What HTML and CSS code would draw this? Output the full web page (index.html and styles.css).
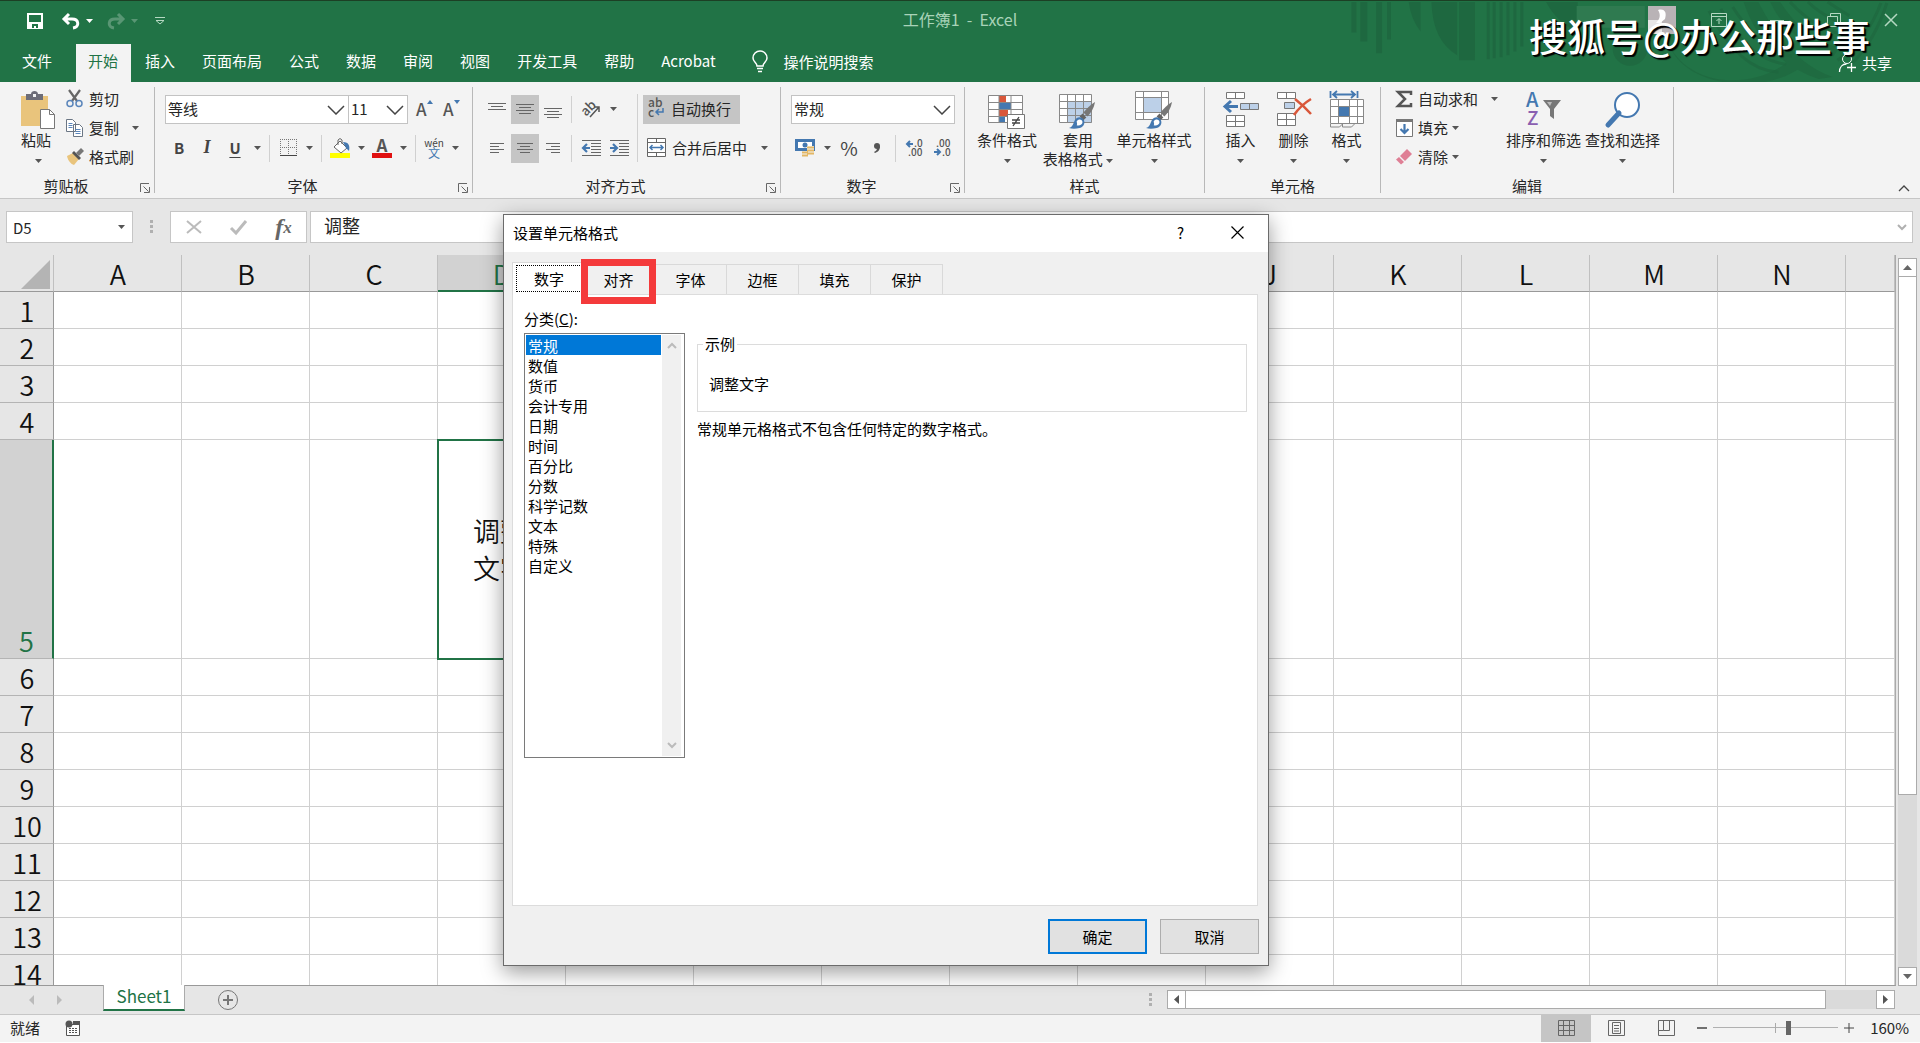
FILE: index.html
```html
<!DOCTYPE html>
<html lang="zh-CN">
<head>
<meta charset="utf-8">
<title>工作簿1 - Excel</title>
<link rel="stylesheet" href="styles.css">
</head>
<body>
<svg class="defs" aria-hidden="true">
  <symbol id="caret" viewBox="0 0 7 4"><path d="M0 0h7L3.500 4z" fill="currentColor"/></symbol>
  <symbol id="chev" viewBox="0 0 18 10"><path d="M1 1l8 8 8-8" fill="none" stroke="currentColor" stroke-width="1.500"/></symbol>
  <symbol id="launch" viewBox="0 0 10 10"><path d="M.5 9V.5H9M3.500 3.500l5 5M9.500 4v5.500H4" fill="none" stroke="#666"/></symbol>
  <symbol id="brush" viewBox="0 0 28 28"><path d="M27 0c-5 3-9 7-12 11l4 4c4-4 7-9 8-15z" fill="#777"/><path d="M14 12l4 4-3 3-4-4z" fill="#666"/><path d="M0 27c4-1 4-4 6-8 2-4 7-4 9-1s1 8-4 9c-4 1-8 1-11 0z" fill="#4478b0"/><path d="M8 20c2-3 6-2 6 1 0 2-3 4-6 3 1-1 0-2 0-4z" fill="#fff"/></symbol>
</svg>

<header class="top">
  <svg class="swirl" viewBox="0 0 580 82" aria-hidden="true">
    <g fill="#1e653e">
      <path d="M8 1h5v31H8zM17 1h7v40h-7zM33 1h6v52h-6zM44 1h4v38h-4zM66 1h12v30Q68 18 66 1zM89 1h26v54Q90 40 89 1zM117 1h16v59h-16zM145 1h3v58h-3zM151 1h3v57h-3zM158 1h3v56h-3zM165 1h3v54h-3zM172 1h3v50h-3zM179 1h3v45h-3zM205 1h32v30q-20-8-32-30z" opacity=".8"/>
      <path d="M330 45c20 40 80 46 118 18l18 2c-40 32-120 22-136-20zM405 1h15q30 60 75 76l-14 2Q425 60 405 1zM432 1h10q26 40 60 46l-6 9Q450 40 432 1z" opacity=".6"/>
    </g>
    <g fill="none" stroke="#1e653e" stroke-width="3" opacity=".6"><path d="M370 10q30 60 70 62M382 8q28 52 66 56M394 6q28 44 60 50M452 1q28 30 60 34M470 1q22 20 46 24M490 1l22 14M500 60q30-20 44-58M514 64q24-24 36-62"/><circle cx="290" cy="48" r="14" stroke-width="7"/></g>
    <path fill="#2f7a50" d="M236 5h69v22h-69z"/>
  </svg>
  <div class="titlebar">
    <div class="qat">
      <button aria-label="保存"><svg width="16" height="16"><path d="M1 1h14v14H1z" fill="none" stroke="#fff" stroke-width="2"/><path d="M1 9h14v6H1z" fill="#fff"/><path d="M5 11h6v4H9v-2H7v2H5z" fill="#217346"/></svg></button>
      <button class="undo" aria-label="撤消"><svg width="18" height="16"><path d="M7 1L2 6l5 5M2 6h8c7 0 8 8 1 9" fill="none" stroke="#fff" stroke-width="3"/></svg><svg class="c"><use href="#caret"/></svg></button>
      <button class="redo" aria-label="恢复"><svg width="18" height="16"><path d="M11 1l5 5-5 5M16 6H8c-7 0-8 8-1 9" fill="none" stroke="#fff" stroke-width="3"/></svg><svg class="c"><use href="#caret"/></svg></button>
      <button aria-label="自定义快速访问工具栏"><svg width="10" height="8"><path d="M0 .5h10M1 3.500h8L5 7z" fill="none" stroke="#b5d8c2"/></svg></button>
    </div>
    <div class="title">工作簿1&nbsp; -&nbsp; Excel</div>
    <div class="winctl">
      <svg width="28" height="28" aria-label="账户"><path d="M0 0h28v28H0z" fill="#b9b3b6"/><path d="M0 14h14v14H0z" fill="#e8e6e6"/><path d="M10 4c7-2 9 3 7 9l-5 4H8c4-4 5-8 2-13z" fill="#fff"/></svg>
      <button aria-label="功能区显示选项"><svg width="16" height="14"><path d="M.5.500h15v13H.5zM.5 3.500h15M8 11V6M5.500 8L8 5.500 10.500 8" fill="none" stroke="#b5d8c2"/></svg></button>
      <button aria-label="最小化"><svg width="14" height="14"><path d="M0 7.500h14" stroke="#b5d8c2"/></svg></button>
      <button aria-label="还原"><svg width="14" height="14"><path d="M.5 3.500h10v10H.5zM3.500 3V.5h10v10H11" fill="none" stroke="#b5d8c2"/></svg></button>
      <button aria-label="关闭"><svg width="14" height="14"><path d="M1 1l12 12M13 1L1 13" stroke="#b5d8c2" stroke-width="1.500"/></svg></button>
    </div>
  </div>
  <nav class="tabs">
    <button class="file">文件</button><button class="on">开始</button><button>插入</button><button>页面布局</button><button>公式</button><button>数据</button><button>审阅</button><button>视图</button><button>开发工具</button><button>帮助</button><button>Acrobat</button>
    <button class="tell"><svg width="16" height="22"><path d="M5 15c0-3-4-4-4-8a7 7 0 0 1 14 0c0 4-4 5-4 8zM5 17.500h6M6 20.500h4" fill="none" stroke="#fff" stroke-width="1.500"/></svg>操作说明搜索</button>
    <button class="share"><svg width="18" height="18"><circle cx="8" cy="5" r="4.500" fill="none" stroke="#fff"/><path d="M.5 18c0-5 3-8 7-8M8 13.500h9M12.500 9v9" fill="none" stroke="#fff" stroke-width="1.300"/></svg>共享</button>
  </nav>
  <div class="mark">搜狐号@办公那些事</div>
</header>

<section class="ribbon">
  <div class="group g1">
    <div class="body">
      <button class="big"><svg width="36" height="38"><path d="M1 5h27v30H1z" fill="#e9c47c"/><path d="M6 3h5c0-4 7-4 7 0h5v6H6z" fill="#6d6d78"/><path d="M13 3h3v3h-3z" fill="#f3f3f3"/><path d="M20.500 18.500h9l5 5v14h-14z" fill="#fff" stroke="#777"/><path d="M29.500 18.500v5h5" fill="none" stroke="#777"/></svg><span>粘贴</span><svg class="c"><use href="#caret"/></svg></button>
      <div class="rows">
        <button><svg width="18" height="18"><path d="M3 0l8 11M14 0L6 11" stroke="#666" stroke-width="2.200"/><circle cx="4" cy="13.500" r="3" fill="none" stroke="#5b86bb" stroke-width="1.500"/><circle cx="13" cy="13.500" r="3" fill="none" stroke="#5b86bb" stroke-width="1.500"/></svg>剪切</button>
        <button><svg width="18" height="18"><path d="M.5.500h6l3 3v9H.5zM7.500 5.500h6l3 3v9h-9z" fill="#fff" stroke="#6b7684"/><path d="M2.500 4.500h4M2.500 6.500h4M2.500 8.500h4M9.500 10.500h5M9.500 12.500h5M9.500 14.500h5" stroke="#5b86bb"/></svg>复制<svg class="c far"><use href="#caret"/></svg></button>
        <button><svg width="18" height="18"><path d="M1 8l6-3 6 6-5 6C5 16 2 13 1 8z" fill="#e9c47c"/><path d="M6 5l2-2 7 7-2 2z" fill="#555"/><path d="M10 5l5-5 3 3-5 5z" fill="#777"/></svg>格式刷</button>
      </div>
    </div>
    <div class="label"><span>剪贴板</span><svg class="l"><use href="#launch"/></svg></div>
  </div>

  <div class="group g2">
    <div class="body col">
      <div class="line">
        <label class="combo fontname"><select aria-label="字体"><option>等线</option></select><svg><use href="#chev"/></svg></label>
        <label class="combo fontsize"><select aria-label="字号"><option>11</option></select><svg><use href="#chev"/></svg></label>
        <button class="grow" aria-label="增大字号">A<svg class="c"><path d="M0 4h6L3 0z" fill="#4478b0"/></svg></button>
        <button class="grow" aria-label="减小字号">A<svg class="c"><path d="M0 0h6L3 4z" fill="#4478b0"/></svg></button>
      </div>
      <div class="line">
        <button class="b28 bold">B</button><button class="b28 ital">I</button><button class="b28 under">U</button><button class="dd" aria-label="下划线选项"><svg class="c"><use href="#caret"/></svg></button><i class="sep"></i>
        <button class="b26" aria-label="边框"><svg width="17" height="17"><path d="M.5 0v16M8.500 0v16M16.500 0v16M0 .5h17M0 8.500h17" stroke="#777" stroke-dasharray="1 1"/><path d="M0 16.500h17" stroke="#444"/></svg></button><button class="dd" aria-label="边框选项"><svg class="c"><use href="#caret"/></svg></button><i class="sep"></i>
        <button class="b26" aria-label="填充颜色"><svg width="20" height="20"><path d="M0 15h20v5H0z" fill="#ff0"/><path d="M10 3l7 7-6 5-7-6z" fill="#fff" stroke="#666"/><path d="M8 7V2q2-3 4 0v4" fill="none" stroke="#666"/><path d="M13 4c6 0 7 4 6 9l-3-3z" fill="#4478b0"/></svg></button><button class="dd" aria-label="填充颜色选项"><svg class="c"><use href="#caret"/></svg></button>
        <button class="b26 fcolor" aria-label="字体颜色"><span>A</span></button><button class="dd" aria-label="字体颜色选项"><svg class="c"><use href="#caret"/></svg></button><i class="sep"></i>
        <button class="b26 wen" aria-label="显示拼音"><small>wén</small><span>文</span></button><button class="dd" aria-label="拼音选项"><svg class="c"><use href="#caret"/></svg></button>
      </div>
    </div>
    <div class="label"><span>字体</span><svg class="l"><use href="#launch"/></svg></div>
  </div>

  <div class="group g3">
    <div class="body">
      <div class="col">
        <div class="line">
          <button class="b28" aria-label="顶端对齐"><svg width="18" height="18"><path d="M0 3.500h18M3 6.500h12M0 9.500h18" stroke="#666"/></svg></button><button class="b28 sel" aria-label="垂直居中"><svg width="18" height="18"><path d="M0 4.500h18M3 7.500h12M0 10.500h18M3 13.500h12" stroke="#666"/></svg></button><button class="b28" aria-label="底端对齐"><svg width="18" height="18"><path d="M0 8.500h18M3 11.500h12M0 14.500h18M3 17.500h12" stroke="#666"/></svg></button><i class="sep"></i>
          <button class="b28" aria-label="方向"><svg width="20" height="18"><text x="0" y="13" transform="rotate(-45 7 9)" font-size="13" class="bt">ab</text><path d="M9 17L18 7M13 7h5v5" fill="none" stroke="#555" stroke-width="1.500"/></svg></button><button class="dd" aria-label="方向选项"><svg class="c"><use href="#caret"/></svg></button>
        </div>
        <div class="line">
          <button class="b28" aria-label="左对齐"><svg width="18" height="14"><path d="M2 2.500h14M2 5.500h9M2 8.500h14M2 11.500h9" stroke="#666"/></svg></button><button class="b28 sel" aria-label="居中"><svg width="18" height="14"><path d="M1 2.500h16M4 5.500h10M1 8.500h16M4 11.500h10" stroke="#666"/></svg></button><button class="b28" aria-label="右对齐"><svg width="18" height="14"><path d="M2 2.500h14M7 5.500h9M2 8.500h14M7 11.500h9" stroke="#666"/></svg></button><i class="sep"></i>
          <button class="b28" aria-label="减少缩进"><svg width="19" height="18"><path d="M0 1.500h19M9 4.500h10M9 7.500h10M9 10.500h10M9 13.500h10M0 16.500h19" stroke="#666"/><path d="M8 9H2M5 5L1 9l4 4" fill="none" stroke="#4478b0" stroke-width="2.200"/></svg></button><button class="b28" aria-label="增加缩进"><svg width="19" height="18"><path d="M0 1.500h19M9 4.500h10M9 7.500h10M9 10.500h10M9 13.500h10M0 16.500h19" stroke="#666"/><path d="M0 9h6M3 5l4 4-4 4" fill="none" stroke="#4478b0" stroke-width="2.200"/></svg></button>
        </div>
      </div>
      <i class="sep tall"></i>
      <div class="col">
        <button class="wide sel"><svg width="18" height="20"><text x="1" y="8" font-size="12" class="bt">ab</text><text x="1" y="18" font-size="12" class="bt">c</text><path d="M16 9v4H9M12 10l-3 3 3 3" fill="none" stroke="#4478b0" stroke-width="1.500"/></svg>自动换行</button>
        <button class="wide"><svg width="19" height="19"><path d="M.5.500h18v18H.5zM.5 4.500h18M.5 14.500h18M9.500.500v4M9.500 14.500v4" fill="#fff" stroke="#666"/><path d="M3 9.500h13M5.500 7L3 9.500 5.500 12M13.500 7L16 9.500 13.500 12" fill="none" stroke="#4478b0" stroke-width="1.500"/></svg>合并后居中<svg class="c far"><use href="#caret"/></svg></button>
      </div>
    </div>
    <div class="label"><span>对齐方式</span><svg class="l"><use href="#launch"/></svg></div>
  </div>

  <div class="group g4">
    <div class="body col">
      <div class="line"><label class="combo numfmt"><select aria-label="数字格式"><option>常规</option></select><svg><use href="#chev"/></svg></label></div>
      <div class="line">
        <button class="b28" aria-label="会计数字格式"><svg width="20" height="20"><path d="M1.500 2.500h17v9h-17z" fill="#fff" stroke="#4478b0" stroke-width="3"/><circle cx="10" cy="7" r="2.500" fill="#4478b0"/><path d="M12 8h7v11H7v-6h5z" fill="#f3f3f3"/><path d="M12 9.500h7M12 12.500h7M12 15.500h7M7 14.500h6M7 17.500h6" stroke="#e3b765" stroke-width="2"/></svg></button><button class="dd" aria-label="会计格式选项"><svg class="c"><use href="#caret"/></svg></button><button class="b28 pct">%</button><button class="b28" aria-label="千位分隔样式"><svg width="8" height="12"><circle cx="4" cy="4" r="3" fill="#555"/><path d="M7 4c0 4-2 6-5 7l-1-1c2-1 3-2 3-4z" fill="#555"/></svg></button><i class="sep"></i>
        <button class="b28" aria-label="增加小数位数"><svg width="18" height="18"><text x="8" y="8" font-size="10" class="bt">.0</text><text x="2" y="17" font-size="10" class="bt">.00</text><path d="M7 5H2M4 2L1 5l3 3" fill="none" stroke="#4478b0" stroke-width="2"/></svg></button><button class="b28" aria-label="减少小数位数"><svg width="18" height="18"><text x="2" y="8" font-size="10" class="bt">.00</text><text x="8" y="17" font-size="10" class="bt">.0</text><path d="M0 13h6M3 10l3 3-3 3" fill="none" stroke="#4478b0" stroke-width="2"/></svg></button>
      </div>
    </div>
    <div class="label"><span>数字</span><svg class="l"><use href="#launch"/></svg></div>
  </div>

  <div class="group g5">
    <div class="body">
      <button class="big"><svg width="38" height="38"><path d="M.5 4.500h34v27H.5z" fill="#fff"/><path d="M11 5h7v6h-7zM11 19h9v6h-9z" fill="#d9573a"/><path d="M11 12h12v6H11zM11 26h6v6h-6z" fill="#4478b0"/><path d="M.5 4.500h34v27H.5zM11 4v28M23 4v28M0 11.500h34M0 18.500h34M0 25.500h34" fill="none" stroke="#888"/><path d="M19.500 23.500h17v14h-17z" fill="#fff" stroke="#777"/><path d="M24 29h8M24 32h8M31 26l-6 9" stroke="#444" stroke-width="1.300"/></svg><span>条件格式</span><svg class="c"><use href="#caret"/></svg></button>
      <button class="big"><svg width="38" height="38"><path d="M.5 3.500h32v28H.5z" fill="#fff"/><path d="M9 10h24v22H9z" fill="#bcd0e8"/><path d="M.5 3.500h32v28H.5zM8.500 3v29M16.500 3v29M24.500 3v29M0 10.500h32M0 17.500h32M0 24.500h32" fill="none" stroke="#888"/><use href="#brush" x="10" y="11" width="27" height="27"/></svg><span>套用<br>表格格式 <svg class="c"><use href="#caret"/></svg></span></button>
      <button class="big"><svg width="38" height="38"><path d="M.5.500h33v28H.5z" fill="#fff"/><path d="M8 7h18v14H8z" fill="#bcd0e8"/><path d="M.5.500h33v28H.5zM8.500 0v29M26.500 0v29M0 6.500h34M0 21.500h34" fill="none" stroke="#888"/><use href="#brush" x="11" y="11" width="27" height="27"/></svg><span>单元格样式</span><svg class="c"><use href="#caret"/></svg></button>
    </div>
    <div class="label"><span>样式</span></div>
  </div>

  <div class="group g6">
    <div class="body">
      <button class="big"><svg width="36" height="38"><path d="M3.500 1.500h18v6h-18zM12.500 1v6M3.500 24.500h18v11h-18zM12.500 24v11M3 30.500h18" fill="#fff" stroke="#777"/><path d="M17.500 12.500h18v6h-18zM26.500 12v6" fill="#bcd0e8" stroke="#777"/><path d="M15 15.500H3M8 10l-6 5.500L8 21" fill="none" stroke="#4478b0" stroke-width="3"/></svg><span>插入</span><svg class="c"><use href="#caret"/></svg></button>
      <button class="big"><svg width="36" height="38"><path d="M1.500 1.500h18v6h-18zM10.500 1v6M1.500 22.500h18v12h-18zM10.500 22v12M1 28.500h18" fill="#fff" stroke="#777"/><path d="M8.500 11.500h10v6h-10z" fill="#bcd0e8" stroke="#777"/><path d="M19 8q9 7 16 15M35 8q-10 6-17 16" fill="none" stroke="#d9573a" stroke-width="2.500"/></svg><span>删除</span><svg class="c"><use href="#caret"/></svg></button>
      <button class="big"><svg width="36" height="38"><path d="M1.500 0v7M28.500 0v7M4 3.500h22M8 0L4 3.500 8 7M22 0l4 3.500L22 7" fill="none" stroke="#4478b0" stroke-width="1.800"/><path d="M1.500 8.500h33v24h-33z" fill="#fff"/><path d="M10 16h10v10H10z" fill="#4478b0"/><path d="M1.500 8.500h33v24h-33zM9.500 8v24M20.500 8v24M28.500 8v24M1 15.500h33M1 25.500h33M1.500 33v3h9l3-3v3h9l3-3" fill="none" stroke="#888"/></svg><span>格式</span><svg class="c"><use href="#caret"/></svg></button>
    </div>
    <div class="label"><span>单元格</span></div>
  </div>

  <div class="group g7">
    <div class="body">
      <div class="rows">
        <button><svg width="17" height="18"><path d="M15 5V2H2l7 7-7 7h13v-3" fill="none" stroke="#555" stroke-width="2.500"/></svg>自动求和<svg class="c far"><use href="#caret"/></svg></button>
        <button><svg width="17" height="18"><path d="M.5.500h16v17H.5z" fill="#fff" stroke="#777"/><path d="M0 0h17v3H0z" fill="#777"/><path d="M8.500 5v9M4.500 10l4 4 4-4" fill="none" stroke="#4478b0" stroke-width="2.200"/></svg>填充<svg class="c near"><use href="#caret"/></svg></button>
        <button><svg width="17" height="18"><path d="M11 1l5 5-7 7-5-5z" fill="#df7f95"/><path d="M3 9l5 5-3 2.500-5-5z" fill="#df7f95"/></svg>清除<svg class="c near"><use href="#caret"/></svg></button>
      </div>
      <button class="big"><svg width="36" height="38"><text x="0" y="16" font-size="20" class="az a">A</text><text x="1" y="34" font-size="19" class="az z">Z</text><path d="M17 9h18l-7 9v10l-4-3v-7z" fill="#777"/><path d="M21 11h5l-2 4z" fill="#bbb"/></svg><span>排序和筛选</span><svg class="c"><use href="#caret"/></svg></button>
      <button class="big"><svg width="36" height="38"><circle cx="22" cy="14" r="12" fill="#fff" stroke="#4478b0" stroke-width="2"/><path d="M14 22L3 34" stroke="#4478b0" stroke-width="5" stroke-linecap="round"/></svg><span>查找和选择</span><svg class="c"><use href="#caret"/></svg></button>
    </div>
    <div class="label"><span>编辑</span></div>
  </div>
  <button class="collapse" aria-label="折叠功能区"><svg width="12" height="8"><path d="M1 7l5-5 5 5" fill="none" stroke="#444" stroke-width="1.300"/></svg></button>
</section>

<section class="formula">
  <label class="combo name"><input value="D5" aria-label="名称框"><svg class="c"><use href="#caret"/></svg></label>
  <svg class="grip" width="4" height="14"><path d="M0 0h3v3H0zM0 5h3v3H0zM0 10h3v3H0z" fill="#b0b0b0"/></svg>
  <div class="fx">
    <button aria-label="取消"><svg width="16" height="14"><path d="M1 1l14 12M15 1L1 13" stroke="#bbb" stroke-width="2"/></svg></button>
    <button aria-label="输入"><svg width="17" height="14"><path d="M1 8l5 5L16 1" fill="none" stroke="#bbb" stroke-width="3"/></svg></button>
    <button class="fn">f<sub>x</sub></button>
  </div>
  <label class="combo text"><input value="调整" aria-label="编辑栏"><svg width="10" height="7"><path d="M1 1l4 4 4-4" fill="none" stroke="#b0b0b0" stroke-width="2"/></svg></label>
</section>

<main class="work">
  <div class="sheet">
    <table class="grid">
      <colgroup><col class="hd"><col span="14" class="cw"><col></colgroup>
      <thead><tr><th><svg class="corner" width="30" height="29"><path d="M29 0v29H0z" fill="#b4b4b4"/></svg></th><th>A</th><th>B</th><th>C</th><th class="cur">D</th><th>E</th><th>F</th><th>G</th><th>H</th><th>I</th><th>J</th><th>K</th><th>L</th><th>M</th><th>N</th><th></th></tr></thead>
      <tbody>
        <tr><th>1<td><td><td><td><td><td><td><td><td><td><td><td><td><td><td>
        <tr><th>2<td><td><td><td><td><td><td><td><td><td><td><td><td><td><td>
        <tr><th>3<td><td><td><td><td><td><td><td><td><td><td><td><td><td><td>
        <tr><th>4<td><td><td><td><td><td><td><td><td><td><td><td><td><td><td>
        <tr class="r5"><th>5<td><td><td><td class="active">调整<br>文字<td><td><td><td><td><td><td><td><td><td><td>
        <tr><th>6<td><td><td><td><td><td><td><td><td><td><td><td><td><td><td>
        <tr><th>7<td><td><td><td><td><td><td><td><td><td><td><td><td><td><td>
        <tr><th>8<td><td><td><td><td><td><td><td><td><td><td><td><td><td><td>
        <tr><th>9<td><td><td><td><td><td><td><td><td><td><td><td><td><td><td>
        <tr><th>10<td><td><td><td><td><td><td><td><td><td><td><td><td><td><td>
        <tr><th>11<td><td><td><td><td><td><td><td><td><td><td><td><td><td><td>
        <tr><th>12<td><td><td><td><td><td><td><td><td><td><td><td><td><td><td>
        <tr><th>13<td><td><td><td><td><td><td><td><td><td><td><td><td><td><td>
        <tr><th>14<td><td><td><td><td><td><td><td><td><td><td><td><td><td><td>
      </tbody>
    </table>
  </div>
  <div class="vscroll">
    <button aria-label="向上滚动"><svg width="9" height="5"><path d="M0 5h9L4.500 0z" fill="#666"/></svg></button>
    <div class="thumb"></div><div class="space"></div>
    <button aria-label="向下滚动"><svg width="9" height="5"><path d="M0 0h9L4.500 5z" fill="#666"/></svg></button>
  </div>
</main>

<footer class="sheets">
  <button class="nav" aria-label="上一张"><svg width="5" height="10"><path d="M5 0v10L0 5z" fill="#bbb"/></svg></button>
  <button class="nav" aria-label="下一张"><svg width="5" height="10"><path d="M0 0v10l5-5z" fill="#bbb"/></svg></button>
  <button class="stab">Sheet1</button>
  <button class="add" aria-label="新工作表"><svg width="20" height="20"><circle cx="10" cy="10" r="9.500" fill="none" stroke="#777"/><path d="M5 10h10M10 5v10" stroke="#777" stroke-width="2"/></svg></button>
  <svg class="grip" width="4" height="14"><path d="M0 0h3v3H0zM0 5h3v3H0zM0 10h3v3H0z" fill="#b0b0b0"/></svg>
  <div class="hscroll">
    <button aria-label="向左滚动"><svg width="5" height="9"><path d="M5 0v9L0 4.500z" fill="#555"/></svg></button>
    <div class="thumb"></div><div class="space"></div>
    <button aria-label="向右滚动"><svg width="5" height="9"><path d="M0 0v9l5-4.500z" fill="#555"/></svg></button>
  </div>
</footer>

<footer class="status">
  <span>就绪</span>
  <svg class="macro" width="16" height="16"><path d="M1.500 4.500h13v11h-13z" fill="#fff" stroke="#555"/><path d="M8 1h7v4H8z" fill="#555"/><circle cx="4" cy="4" r="3.500" fill="#555"/><path d="M4 8.500h9M4 10.500h9M4 12.500h9" stroke="#555" stroke-dasharray="2 1"/></svg>
  <div class="views">
    <button class="sel" aria-label="普通"><svg width="17" height="16"><path d="M.5.500h16v15H.5zM5.500 0v16M11.500 0v16M0 5.500h17M0 10.500h17" fill="none" stroke="#666"/></svg></button>
    <button aria-label="页面布局"><svg width="17" height="16"><path d="M.5.500h16v15H.5zM4.500 2.500h8v11h-8zM6 5.500h5M6 8.500h5M6 11h5" fill="none" stroke="#666"/></svg></button>
    <button aria-label="分页预览"><svg width="17" height="16"><path d="M.5.500h16v15H.5zM.5 10.500h5M5.500 0v10.500h6V0" fill="none" stroke="#666"/></svg></button>
  </div>
  <button class="zm" aria-label="缩小"><svg width="10" height="10"><path d="M0 5h10" stroke="#444" stroke-width="1.500"/></svg></button>
  <input class="zoom" type="range" min="0" max="100" value="61" aria-label="缩放">
  <button class="zm" aria-label="放大"><svg width="10" height="10"><path d="M0 5h10M5 0v10" stroke="#444"/></svg></button>
  <span class="pc">160%</span>
</footer>

<div class="dialog" role="dialog" aria-labelledby="dt">
  <div class="dtitle"><span id="dt">设置单元格格式</span><button>?</button><button aria-label="关闭对话框"><svg width="13" height="13"><path d="M.5.500l12 12M12.500.500l-12 12" stroke="#000" stroke-width="1.200"/></svg></button></div>
  <div class="dtabs">
    <button class="on"><span>数字</span></button><button class="hot">对齐</button><button>字体</button><button>边框</button><button>填充</button><button>保护</button>
  </div>
  <div class="panel">
    <div class="cats">
      <label for="cat">分类(<u>C</u>):</label>
      <div class="listbox">
        <select id="cat" size="12"><option selected>常规</option><option>数值</option><option>货币</option><option>会计专用</option><option>日期</option><option>时间</option><option>百分比</option><option>分数</option><option>科学记数</option><option>文本</option><option>特殊</option><option>自定义</option></select>
        <div class="bar"><svg width="10" height="7"><path d="M1 6l4-4 4 4" fill="none" stroke="#bbb" stroke-width="2"/></svg><svg width="10" height="7"><path d="M1 1l4 4 4-4" fill="none" stroke="#bbb" stroke-width="2"/></svg></div>
      </div>
    </div>
    <div class="detail">
      <fieldset><legend>示例</legend>调整文字</fieldset>
      <p>常规单元格格式不包含任何特定的数字格式。</p>
    </div>
  </div>
  <div class="dbtns"><button class="ok">确定</button><button>取消</button></div>
</div>
</body>
</html>
```
FILE: styles.css
```css
*, *::after { box-sizing: border-box; }
html, body { height: 100%; }
body {
  margin: 0;
  display: flex;
  flex-direction: column;
  overflow: hidden;
  position: relative;
  background: #e6e6e6;
  color: #262626;
  font: 15px/20px "Noto Sans CJK SC", sans-serif;
}
button, input, select { font: inherit; color: inherit; border: 0; background: none; padding: 0; margin: 0; border-radius: 0; }
button { display: flex; align-items: center; justify-content: center; white-space: nowrap; }
svg { display: block; flex: none; overflow: visible; }
.defs { position: absolute; width: 0; height: 0; }
.c { width: 7px; height: 4px; color: #555; }

/* title bar and tabs */
.top { position: relative; background: #217346; border-top: 1px solid #1c3f24; color: #fff; flex: none; }
.swirl { position: absolute; right: 0; top: 0; width: 580px; height: 81px; overflow: hidden; }
.titlebar { position: relative; display: grid; grid-template-columns: 1fr auto 1fr; height: 43px; align-items: start; }
.qat { display: flex; align-items: center; height: 40px; padding-left: 27px; }
.qat .c { color: #fff; margin-left: 6px; }
.undo { margin-left: 19px; }
.redo { margin: 0 17px 0 14px; opacity: .25; }
.title { color: #a9d3b8; padding-top: 8px; font-size: 16px; }
.winctl { display: flex; align-items: center; justify-content: flex-end; gap: 43px; height: 38px; padding-right: 22px; }
.winctl > svg { margin-right: -8px; }
.tabs { position: relative; display: flex; height: 38px; }
.tabs button { padding: 0 14px 4px 13px; }
.tabs .file { padding: 0 24px 4px 22px; }
.tabs .on { padding: 0 13px 4px 12px; margin-right: 1px; background: #f3f3f3; color: #217346; }
.tabs .tell { gap: 16px; margin-left: 9px; padding-bottom: 2px; }
.tabs .share { gap: 5px; margin-left: auto; padding: 0 28px 0 0; }
.mark {
  position: absolute; right: 50px; top: 13px;
  font-size: 38px; line-height: 42px; font-weight: 500;
  text-shadow: 2px 2px 1px #000, 1px 1px 0 #000;
}

/* ribbon */
.ribbon { display: flex; flex: none; height: 117px; padding: 5px 0; background: #f3f3f3; border-bottom: 1px solid #c6c6c6; }
.group { display: flex; flex-direction: column; border-right: 1px solid #b8b8b8; }
.g1 { width: 155px; }
.g2 { width: 318px; }
.g3 { width: 308px; }
.g4 { width: 184px; }
.g5 { width: 240px; }
.g6 { width: 176px; }
.g7 { width: 293px; }
.body { display: flex; flex: 1; }
.label { display: flex; align-items: center; height: 14px; }
.label span { flex: 1; text-align: center; }
.l { width: 10px; height: 10px; margin: 4px 4px 0 8px; }
.big { flex-direction: column; justify-content: flex-start; padding-top: 4px; line-height: 19px; }
.big > span { margin-top: 1px; }
.big > .c { margin-top: 10px; }
.big span .c { display: inline-block; vertical-align: middle; }
.rows { display: flex; flex-direction: column; margin-top: -2px; }
.rows button { height: 29px; gap: 5px; padding-bottom: 2px; justify-content: flex-start; }
.far { margin-left: 8px; }
.near { margin-left: -1px; }
.g1 .big { width: 36px; margin-left: 20px; }
.g1 .big > span { margin-right: 4px; }
.g1 .rows { margin-left: 10px; }
.col { display: flex; flex-direction: column; gap: 10px; padding-top: 8px; }
.body.col { padding-left: 10px; }
.line { display: flex; align-items: center; height: 29px; }
.line button { padding-bottom: 2px; }
.combo { display: grid; align-items: center; height: 29px; background: #fff; border: 1px solid #c3c3c3; }
.combo > * { grid-area: 1 / 1; }
.combo select, .combo input { appearance: none; width: 100%; height: 100%; padding: 0 2px 2px; outline: 0; }
.combo > svg { justify-self: end; margin-right: 3px; pointer-events: none; }
.line .combo > svg { width: 18px; height: 10px; color: #444; }
.fontname { width: 184px; }
.fontsize { width: 60px; margin: 0 8px 0 -1px; }
.numfmt { width: 164px; }
.grow { width: 27px; align-items: flex-start; justify-content: flex-start; font-size: 17px; font-weight: 500; color: #555; }
.grow .c { margin-top: 1px; }
.b28 { width: 28px; height: 29px; color: #444; }
.b26 { width: 26px; height: 29px; }
.dd { width: 16px; height: 29px; }
.sep { width: 1px; height: 27px; margin: 0 5px 0 4px; background: #d0d0d0; }
.sel { background: #c5c5c5; }
.bold { font-weight: 700; }
.ital { font: italic bold 18px "Liberation Serif", serif; }
.under { font-weight: 700; text-decoration: underline; text-underline-offset: 3px; }
.fcolor span { width: 20px; height: 20px; border-bottom: 5px solid #e01010; color: #555; font-weight: 700; line-height: 13px; font-size: 17px; }
.wen { flex-direction: column; color: #4478b0; line-height: 10px; font-size: 12px; }
.wen small { font-size: 10px; line-height: 10px; color: #444; }
.bt { font-family: "Noto Sans CJK SC", sans-serif; font-weight: 500; fill: #555; }
.az { font-family: "Noto Sans CJK SC", sans-serif; font-weight: 500; }
.a { fill: #4478b0; }
.z { fill: #8a5fb0; }
.g3 .body { padding-left: 10px; }
.tall { height: 68px; margin: 7px 5px 0 4px; }
.g3 .line { width: 150px; }
.wide { height: 29px; width: 97px; gap: 6px; padding: 0 0 2px 4px; justify-content: flex-start; }
.pct { font-size: 19px; }
.g5 .big:nth-child(1) { width: 62px; margin-left: 11px; }
.g5 .big:nth-child(2) { width: 76px; margin-left: 2px; }
.g5 .big:nth-child(3) { width: 76px; }
.g6 .body { padding-left: 9px; }
.g6 .big { width: 53px; }
.g7 .rows { width: 108px; margin-left: 15px; }
.g7 .big { width: 79px; }
.collapse { margin: auto 10px 0 auto; height: 10px; }

/* formula bar */
.formula { display: flex; flex: none; align-items: center; height: 56px; padding: 0 7px 0 6px; }
.formula .combo, .fx { height: 32px; background: #fff; border: 1px solid #c6c6c6; }
.name { width: 127px; }
.name input { padding: 0 6px; }
.name > svg { margin-right: 7px; }
.formula .grip { margin: 0 16px 0 17px; }
.fx { display: flex; width: 137px; margin-right: 3px; }
.fx button { flex: 1; }
.fx .fn { font: italic bold 24px/20px "Liberation Serif", serif; color: #666; }
.fn sub { font-size: 17px; line-height: 1; }
.formula .text { flex: 1; font-size: 18px; }
.text input { padding: 0 13px 4px; }
.text > svg { margin-right: 5px; }

/* worksheet */
.work { display: flex; flex: 1; min-height: 0; }
.sheet { flex: 1; overflow: hidden; background: #fff; border-right: 1px solid #aaa; border-bottom: 1px solid #999; }
.grid { table-layout: fixed; width: 100%; border-spacing: 0; font-size: 27px; line-height: 34px; color: #111; }
.hd { width: 54px; }
.cw { width: 128px; }
.grid th, .grid td { height: 37px; padding: 0; border-right: 1px solid #d0d0d0; border-bottom: 1px solid #d0d0d0; }
.grid th { background: #e6e6e6; padding: 2px 0 0 1px; font-weight: 350; border-right-color: #c0c0c0; border-bottom-color: #999; }
.grid tbody th { border-right-color: #999; border-bottom-color: #b4b4b4; }
.grid .cur { background: #d2d2d2; color: #217346; border-bottom: 2px solid #217346; line-height: 33px; }
.grid .r5 th { height: 219px; vertical-align: bottom; background: #d2d2d2; color: #217346; border-right: 2px solid #217346; }
.grid .active { padding-right: 3px; text-align: center; line-height: 37px; font-weight: 350; outline: 2px solid #217346; outline-offset: -1px; }
.corner { margin-left: 20px; }
.vscroll { display: flex; flex-direction: column; width: 24px; padding: 3px 3px 0 2px; }
.vscroll button, .hscroll button { border: 1px solid #ababab; background: #fff; width: 19px; height: 19px; }
.thumb { border: 1px solid #ababab; background: #fff; }
.space { background: #dadada; }
.vscroll .thumb { flex: 518; margin-top: -1px; }
.vscroll .space { flex: 173; }

/* sheet tabs */
.sheets { display: flex; flex: none; align-items: center; height: 28px; padding-right: 25px; }
.nav { width: 28px; height: 28px; }
.nav:first-child { margin-left: 17px; }
.stab { align-self: flex-start; margin: -1px 33px 0 30px; padding-bottom: 3px; width: 82px; height: 26px; background: #fff; color: #217346; border: solid #ababab; border-width: 0 1px; border-bottom: 2px solid #217346; font-size: 17px; position: relative; }
.sheets .grip { margin-left: auto; margin-right: 14px; }
.hscroll { display: flex; flex: 0 1 728px; margin-bottom: 1px; }
.hscroll .thumb { flex: 640; margin-left: -1px; }
.hscroll .space { flex: 50; }

/* status bar */
.status { display: flex; flex: none; align-items: center; height: 29px; padding: 0 11px 0 10px; background: #f3f3f3; border-top: 1px solid #c6c6c6; border-bottom: 1px solid #fff; }
.status span { padding-bottom: 2px; }
.macro { margin: 0 0 2px 25px; }
.views { display: flex; margin-left: auto; align-self: stretch; }
.views button { width: 50px; height: 100%; padding-bottom: 2px; }
.zm { width: 22px; height: 27px; padding-bottom: 2px; }
.zoom {
  appearance: none; width: 125px; height: 16px; margin: 0 0 2px; outline: 0;
  background: linear-gradient(#aaa, #aaa) 50% 50% / 1px 10px no-repeat, linear-gradient(#b0b0b0, #b0b0b0) 0 50% / 100% 1px no-repeat;
}
.zoom::-webkit-slider-thumb { appearance: none; width: 5px; height: 14px; background: #666; }
.pc { margin-left: 10px; }

/* format cells dialog */
.dialog {
  position: absolute; left: 503px; top: 214px; width: 766px;
  background: #f0f0f0; border: 1px solid #6b6b6b; color: #000;
  box-shadow: 0 6px 20px rgba(0, 0, 0, .4);
}
.dtitle { display: flex; height: 37px; padding: 0 2px 2px 9px; background: #fff; align-items: center; }
.dtitle span { margin-right: auto; }
.dtitle button { width: 57px; }
.dtabs { display: flex; align-items: flex-end; height: 42px; padding: 0 8px; }
.dtabs button { width: 72px; height: 30px; border: 1px solid #d9d9d9; border-width: 1px 1px 0 0; }
.dtabs .on { position: relative; width: 71px; height: 33px; margin-bottom: -1px; padding: 0 1px 1px 3px; background: #fff; border-width: 1px 0 0 1px; }
.dtabs .on span { flex: 1; height: 27px; line-height: 25px; border: 1px dotted #000; }
.dtabs .hot { position: relative; }
.hot::after { content: ""; position: absolute; left: -2px; top: -6px; width: 75px; height: 45px; border: 7px solid #f43a3b; }
.panel { display: flex; gap: 12px; margin: 0 10px 0 8px; padding: 14px 10px 0 11px; height: 612px; background: #fff; border: 1px solid #dcdcdc; }
.listbox { display: flex; width: 161px; height: 425px; margin-top: 4px; padding: 1px; border: 1px solid #7a7a7a; }
.listbox select { flex: 1; height: 100%; overflow: hidden; outline: 0; scrollbar-width: none; }
.listbox option { height: 20px; min-height: 20px; padding: 0 2px; line-height: 20px; }
.listbox option:checked { background: linear-gradient(#0078d7, #0078d7); -webkit-text-fill-color: #fff; }
.bar { display: flex; flex-direction: column; justify-content: space-between; align-items: center; width: 19px; margin: 0 2px 0 1px; padding: 7px 0; background: #f0f0f0; }
.detail { flex: 1; padding-top: 25px; }
.detail fieldset { margin: 0; height: 78px; padding: 20px 11px 0; border: 1px solid #dcdcdc; }
.detail legend { padding: 0 2px; margin-left: -6px; }
.detail p { margin: 7px 0 0; }
.dbtns { display: flex; justify-content: flex-end; gap: 13px; padding: 13px 9px 11px 0; }
.dbtns button { width: 99px; height: 35px; background: #e1e1e1; border: 1px solid #adadad; }
.dbtns .ok { border: 2px solid #0078d7; }
```
